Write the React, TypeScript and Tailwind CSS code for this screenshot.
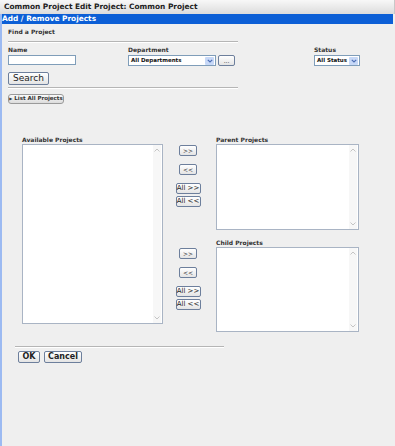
import React from 'react';

function Btn({ children, className = '' }: { children: React.ReactNode; className?: string }) {
  return (
    <button
      className={`flex items-center justify-center whitespace-nowrap rounded-[2px] border border-[#6d7f9c] bg-linear-to-b from-[#ffffff] to-[#e4e4e4] text-[#222] leading-none ${className}`}
    >
      {children}
    </button>
  );
}

function ScrollArrows() {
  return (
    <div className="flex w-[8px] flex-col justify-between bg-[#f7f7f7] py-[2px]">
      <svg width="8" height="6" viewBox="0 0 8 6">
        <path d="M1.5 4.5 L4 2 L6.5 4.5" fill="none" stroke="#c4c4c4" strokeWidth="1" />
      </svg>
      <svg width="8" height="6" viewBox="0 0 8 6">
        <path d="M1.5 1.5 L4 4 L6.5 1.5" fill="none" stroke="#c4c4c4" strokeWidth="1" />
      </svg>
    </div>
  );
}

function ListBox({ className = '' }: { className?: string }) {
  return (
    <div className={`flex justify-end border border-[#a9b4c4] bg-white pr-[1px] ${className}`}>
      <ScrollArrows />
    </div>
  );
}

function Select({ label, className = '' }: { label: string; className?: string }) {
  return (
    <div className={`flex h-[11px] items-center border border-[#7f9db9] bg-white pl-[2px] ${className}`}>
      <span className="flex-1 whitespace-nowrap text-[5.5px] font-bold text-[#111] leading-none">{label}</span>
      <span className="mr-[1px] flex h-[8px] w-[9px] shrink-0 items-center justify-center rounded-[1px] bg-[#c7d8f7]">
        <svg width="6" height="4" viewBox="0 0 6 4">
          <path d="M0.8 0.8 L3 3 L5.2 0.8" fill="none" stroke="#4d6fb5" strokeWidth="1.2" />
        </svg>
      </span>
    </div>
  );
}

function MoveButtons() {
  return (
    <div className="flex w-[53px] flex-col items-center pr-[3px] pt-[1px]">
      <Btn className="h-[11px] w-[18px] text-[6px]">&gt;&gt;</Btn>
      <Btn className="mt-[8px] h-[11px] w-[18px] text-[6px]">&lt;&lt;</Btn>
      <Btn className="mt-[8px] h-[11px] w-[25px] text-[7px]">All &gt;&gt;</Btn>
      <Btn className="mt-[2px] h-[11px] w-[25px] text-[7px]">All &lt;&lt;</Btn>
    </div>
  );
}

export default function App() {
  return (
    <div className="flex h-[446px] w-[395px] flex-col bg-[#efefef] font-['DejaVu_Sans',Verdana,sans-serif] text-[#333]">
      {/* page title */}
      <div className="flex h-[14px] items-center border-r border-[#c8c8c8] bg-linear-to-b from-[#f8f8f8] to-[#dcdcdc] pl-[4px] pr-[3px]">
        <span className="text-[7.4px] font-bold text-[#222] leading-none">Common Project Edit Project: Common Project</span>
      </div>

      <div className="flex flex-1 flex-col border-l-2 border-[#9cbaf2]">
        <div className="mr-[2px] flex h-[10px] items-center bg-[#0c5fd6] text-[7.4px] font-bold text-white leading-none">
          Add / Remove Projects
        </div>

        <div className="flex flex-col pl-[6px]">
          {/* search block */}
          <div className="mt-[5px] text-[6px] font-bold leading-none">Find a Project</div>
          <div className="mt-[6px] h-[2px] w-[230px] border-t border-b border-t-[#b5b5b5] border-b-white" />

          <div className="mt-[4px] flex">
            <div className="flex w-[120px] flex-col">
              <span className="text-[6px] font-bold leading-none">Name</span>
              <div className="mt-[2px] h-[10px] w-[68px] border border-[#7f9db9] bg-white" />
            </div>
            <div className="flex w-[186px] flex-col">
              <span className="text-[6px] font-bold leading-none">Department</span>
              <div className="mt-[2px] flex items-center gap-[2px]">
                <Select label="All Departments" className="w-[88px]" />
                <Btn className="h-[11px] w-[17px] text-[6px]">...</Btn>
              </div>
            </div>
            <div className="flex flex-col">
              <span className="text-[6px] font-bold leading-none">Status</span>
              <Select label="All Status" className="mt-[2px] w-[46px]" />
            </div>
          </div>

          <Btn className="mt-[6px] h-[13px] w-[41px] text-[9px]">Search</Btn>
          <div className="mt-[2px] h-[2px] w-[230px] border-t border-b border-t-[#b5b5b5] border-b-white" />

          <button className="mt-[5px] flex h-[10px] w-[56px] items-center justify-center gap-[2px] rounded-[3px] border border-[#9a9a9a] bg-linear-to-b from-[#fafafa] to-[#dcdcdc] text-[5.5px] font-bold text-[#333] leading-none">
            <span className="text-[4px]">&#9654;</span> List All Projects
          </button>

          {/* dual lists */}
          <div className="ml-[14px] mt-[33px] flex">
            <div className="flex flex-col">
              <span className="h-[7px] text-[6px] font-bold leading-none">Available Projects</span>
              <ListBox className="h-[180px] w-[141px]" />
            </div>
            <div className="flex flex-col">
              <div className="flex">
                <div className="pt-[7px]">
                  <MoveButtons />
                </div>
                <div className="flex flex-col">
                  <span className="h-[7px] text-[6px] font-bold leading-none">Parent Projects</span>
                  <ListBox className="h-[86px] w-[143px]" />
                </div>
              </div>
              <div className="mt-[10px] flex">
                <div className="pt-[7px]">
                  <MoveButtons />
                </div>
                <div className="flex flex-col">
                  <span className="h-[7px] text-[6px] font-bold leading-none">Child Projects</span>
                  <ListBox className="h-[85px] w-[143px]" />
                </div>
              </div>
            </div>
          </div>

          {/* footer */}
          <div className="ml-[7px] mt-[14px] h-[2px] w-[209px] border-t border-b border-t-[#b5b5b5] border-b-white" />
          <div className="ml-[10px] mt-[3px] flex gap-[4px]">
            <Btn className="h-[12px] w-[22px] text-[8px] font-bold">OK</Btn>
            <Btn className="h-[12px] w-[38px] text-[8px] font-bold">Cancel</Btn>
          </div>
        </div>
      </div>
    </div>
  );
}
